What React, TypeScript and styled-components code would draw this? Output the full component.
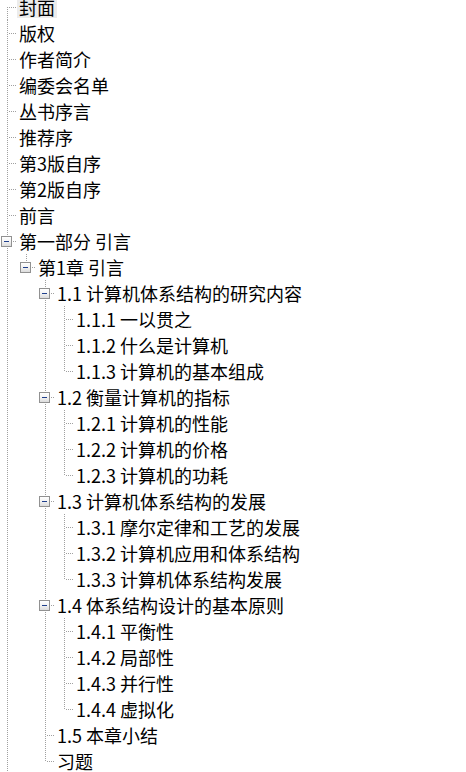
import React from "react";
import styled, { createGlobalStyle, css } from "styled-components";

type Node = { t: string; children?: Node[]; selected?: boolean };

const tree: Node[] = [
  { t: "封面", selected: true },
  { t: "版权" },
  { t: "作者简介" },
  { t: "编委会名单" },
  { t: "丛书序言" },
  { t: "推荐序" },
  { t: "第3版自序" },
  { t: "第2版自序" },
  { t: "前言" },
  {
    t: "第一部分 引言",
    children: [
      {
        t: "第1章 引言",
        children: [
          {
            t: "1.1 计算机体系结构的研究内容",
            children: [
              { t: "1.1.1 一以贯之" },
              { t: "1.1.2 什么是计算机" },
              { t: "1.1.3 计算机的基本组成" },
            ],
          },
          {
            t: "1.2 衡量计算机的指标",
            children: [
              { t: "1.2.1 计算机的性能" },
              { t: "1.2.2 计算机的价格" },
              { t: "1.2.3 计算机的功耗" },
            ],
          },
          {
            t: "1.3 计算机体系结构的发展",
            children: [
              { t: "1.3.1 摩尔定律和工艺的发展" },
              { t: "1.3.2 计算机应用和体系结构" },
              { t: "1.3.3 计算机体系结构发展" },
            ],
          },
          {
            t: "1.4 体系结构设计的基本原则",
            children: [
              { t: "1.4.1 平衡性" },
              { t: "1.4.2 局部性" },
              { t: "1.4.3 并行性" },
              { t: "1.4.4 虚拟化" },
            ],
          },
          { t: "1.5 本章小结" },
          { t: "习题" },
        ],
      },
    ],
  },
];

const Global = createGlobalStyle`
  html, body { margin: 0; padding: 0; background: #fff; overflow: hidden; }
  body { height: 772px; }
`;

const vDots = css`
  background-image: linear-gradient(to bottom, #a0a0a0 50%, transparent 50%);
  background-size: 1px 2px;
`;

const Tree = styled.div`
  margin-top: -6px;
  font-family: "Noto Sans CJK SC", "Noto Sans", sans-serif;
  font-size: 18px;
  color: #000;
`;

const Row = styled.div`
  display: flex;
  align-items: center;
  height: 26px;
`;

const Guide = styled.div<{ $line: boolean }>`
  position: relative;
  flex: none;
  width: 19px;
  height: 100%;
  ${(p) =>
    p.$line &&
    css`
      &::before {
        content: "";
        position: absolute;
        left: 7px;
        top: 0;
        bottom: 0;
        width: 1px;
        ${vDots}
      }
    `}
`;

const Connector = styled.div<{ $top: boolean; $bottom: boolean }>`
  position: relative;
  flex: none;
  width: 17px;
  height: 100%;
  &::before {
    content: "";
    position: absolute;
    left: 7px;
    width: 1px;
    top: ${(p) => (p.$top ? "0" : "13px")};
    bottom: ${(p) => (p.$bottom ? "0" : "13px")};
    ${vDots}
  }
  &::after {
    content: "";
    position: absolute;
    left: 9px;
    top: 13px;
    width: 8px;
    height: 1px;
    background-image: linear-gradient(to right, #a0a0a0 50%, transparent 50%);
    background-size: 2px 1px;
  }
`;

const Expander = styled.span`
  position: absolute;
  z-index: 1;
  left: 1px;
  top: 8px;
  width: 11px;
  height: 11px;
  box-sizing: border-box;
  border: 1px solid #919191;
  background: linear-gradient(to bottom, #ffffff 0%, #f4f4f4 45%, #dcdcdc 100%);
  &::after {
    content: "";
    position: absolute;
    left: 2px;
    top: 4px;
    width: 5px;
    height: 1px;
    background: #1f3f8c;
  }
`;

const Label = styled.span<{ $selected?: boolean }>`
  display: block;
  height: 22px;
  line-height: 22px;
  padding: 0 2px;
  white-space: nowrap;
  background: ${(p) => (p.$selected ? "#ececec" : "transparent")};
`;

function renderNodes(
  nodes: Node[],
  guides: boolean[],
  isRoot: boolean,
  continues: boolean
): React.ReactNode[] {
  const out: React.ReactNode[] = [];
  nodes.forEach((n, i) => {
    const last = i === nodes.length - 1 && !continues;
    const first = isRoot && i === 0;
    out.push(
      <Row key={guides.length + "-" + n.t}>
        {guides.map((g, k) => (
          <Guide key={k} $line={g} />
        ))}
        <Connector $top={!first} $bottom={!last}>
          {n.children && <Expander />}
        </Connector>
        <Label $selected={n.selected}>{n.t}</Label>
      </Row>
    );
    if (n.children) {
      out.push(...renderNodes(n.children, [...guides, !last], false, false));
    }
  });
  return out;
}

export default function App() {
  return (
    <>
      <Global />
      <Tree>{renderNodes(tree, [], true, true)}</Tree>
    </>
  );
}
